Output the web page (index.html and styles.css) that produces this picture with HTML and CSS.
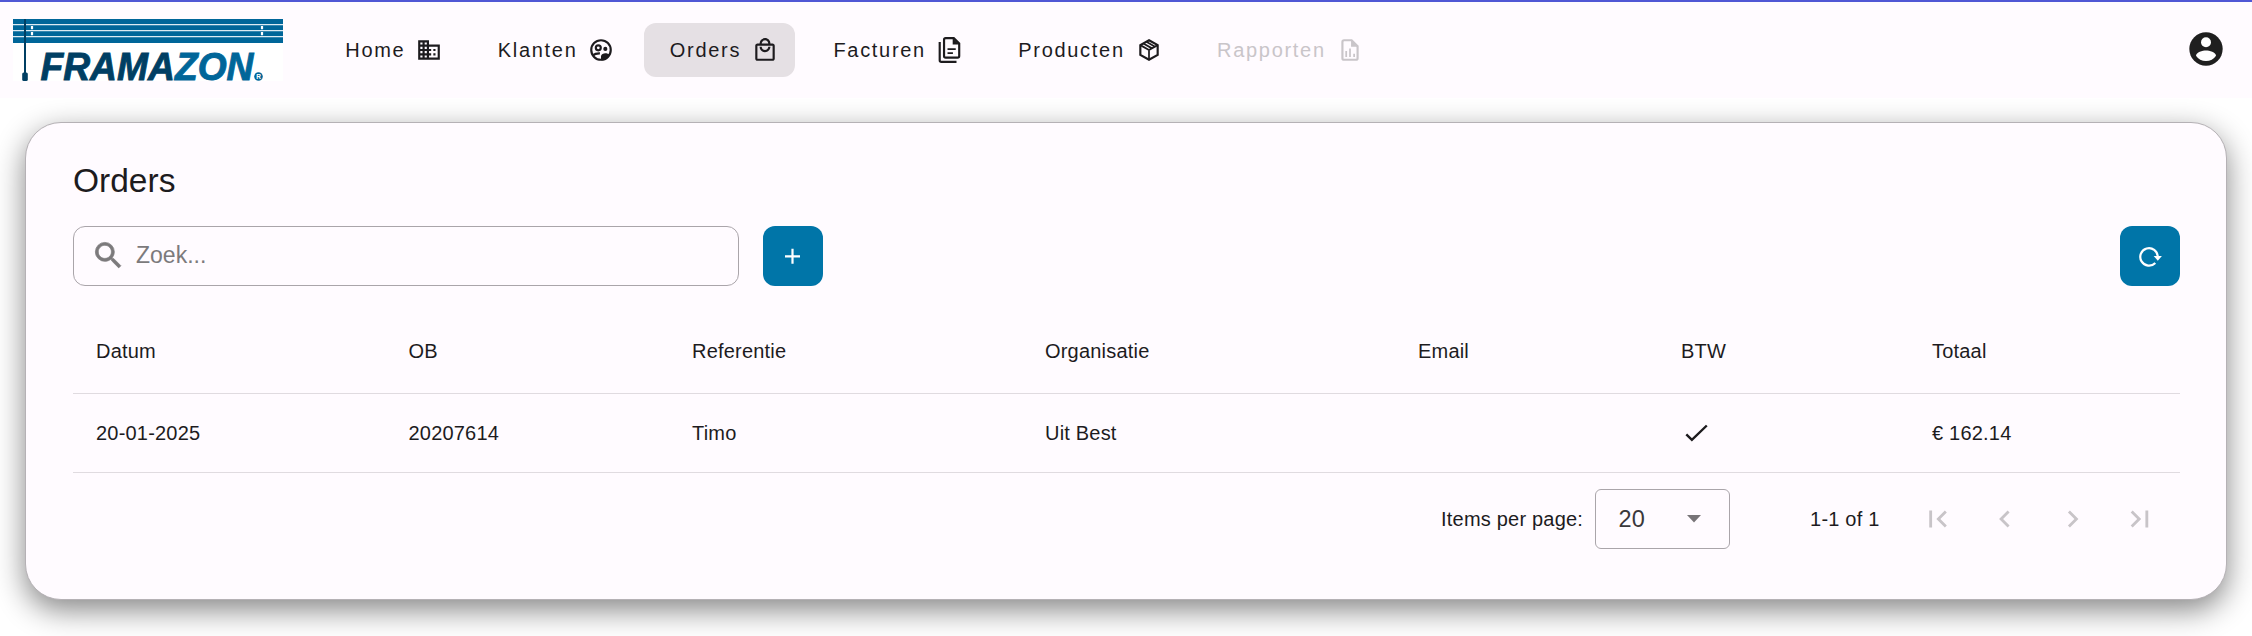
FILE: index.html
```html
<!DOCTYPE html>
<html lang="nl">
<head>
<meta charset="utf-8">
<title>Orders</title>
<link rel="stylesheet" href="styles.css">
</head>
<body>
<header class="topbar">
  <svg class="logo" viewBox="0 0 270 62" role="img" aria-label="Framazon">
    <rect width="270" height="62" fill="#fff"/>
    <rect width="270" height="24" fill="#006699"/>
    <path d="M0 5.6H270M0 11.7H270M0 17.6H270" stroke="#dceaf2" stroke-width="1.2"/>
    <path d="M19 7v3.300M19 13v3.300M249 7v3.300M249 13v3.300" stroke="#fff" stroke-width="2.200"/>
    <path d="M12 0V54" stroke="#003f63" stroke-width="2"/>
    <rect x="9.200" y="53.500" width="5.600" height="8.500" rx="1.500" fill="#003f63"/>
    <text class="logo-word" x="27.500" y="61" textLength="213" lengthAdjust="spacingAndGlyphs"><tspan class="dark">FRAMA</tspan><tspan class="light">ZON</tspan></text>
    <circle cx="245.500" cy="57.500" r="4.300" fill="#006699"/>
    <text class="logo-reg" x="243.200" y="59.900">R</text>
  </svg>
  <nav class="nav">
    <a class="nav-item">Home
      <svg class="icon" viewBox="0 0 24 24"><path d="M12 7V3H2v18h20V7H12zM6 19H4v-2h2v2zm0-4H4v-2h2v2zm0-4H4V9h2v2zm0-4H4V5h2v2zm4 12H8v-2h2v2zm0-4H8v-2h2v2zm0-4H8V9h2v2zm0-4H8V5h2v2zm10 12h-8v-2h2v-2h-2v-2h2v-2h-2V9h8v10zm-2-8h-2v2h2v-2zm0 4h-2v2h2v-2z"/></svg></a>
    <a class="nav-item">Klanten
      <svg class="icon" viewBox="0 0 24 24"><circle class="line" cx="12" cy="12" r="9"/><circle class="line" cx="9.500" cy="10" r="2.300"/><circle cx="16" cy="11" r="1.900"/><path d="M12 21.500v-3.700c0-1.900 2.400-2.900 4-2.900 1.300 0 3.200.6 4.300 1.500-1.500 3.100-4.700 5.100-8.300 5.100z"/><path class="line" d="M4.500 17c1.500-1.400 3.600-2 6.500-1.900"/></svg></a>
    <a class="nav-item active">Orders
      <svg class="icon" viewBox="0 0 24 24"><path d="M19 6h-2c0-2.760-2.240-5-5-5S7 3.240 7 6H5c-1.100 0-2 .9-2 2v12c0 1.100.9 2 2 2h14c1.100 0 2-.9 2-2V8c0-1.100-.9-2-2-2zm-7-3c1.660 0 3 1.340 3 3H9c0-1.660 1.340-3 3-3zm7 17H5V8h14v12zm-7-8c-1.660 0-3-1.340-3-3H7c0 2.760 2.240 5 5 5s5-2.240 5-5h-2c0 1.660-1.340 3-3 3z"/></svg></a>
    <a class="nav-item">Facturen
      <svg class="icon" viewBox="0 0 24 24"><path class="line" d="M8 1h7.500l5 5v11.500A1.500 1.500 0 0 1 19 19H8a1.500 1.500 0 0 1-1.500-1.500v-15A1.500 1.500 0 0 1 8 1zM2.500 4.500v17a1.500 1.500 0 0 0 1.500 1.500H18"/><path class="line thin" d="M9.700 11.200h7.600M9.700 14.800h5"/><path d="M14.500 1v6h6z"/></svg></a>
    <a class="nav-item">Producten
      <svg class="icon" viewBox="0 0 24 24"><path class="line" d="M12 3l8 4.500v9L12 21l-8-4.500v-9z"/><path class="line thin" d="M4 7.500l8 4.600 8-4.600M12 12v9M6.800 5.900l8 4.600M9.600 4.400l8 4.600"/></svg></a>
    <a class="nav-item disabled">Rapporten
      <svg class="icon" viewBox="0 0 24 24"><path class="line" d="M6.500 3h7l5.500 5.500v11a1.500 1.500 0 0 1-1.500 1.500h-11A1.500 1.500 0 0 1 5 19.500v-15A1.500 1.500 0 0 1 6.500 3z"/><path class="line thin" d="M8.500 13v5.500M12 10.500v8M15.800 15.500v3"/><path d="M13 3v6h6z"/></svg></a>
  </nav>
  <svg class="account" viewBox="0 0 24 24"><circle cx="12" cy="12" r="10"/><circle cx="12" cy="8" r="3" fill="#fff"/><path fill="#fff" d="M12 19.200c-2.500 0-4.710-1.280-6-3.220.03-1.990 4-3.080 6-3.080s5.970 1.090 6 3.080c-1.290 1.940-3.500 3.220-6 3.220z"/></svg>
</header>

<main class="card">
  <h1 class="title">Orders</h1>
  <div class="toolbar">
    <label class="search">
      <svg class="search-icon" viewBox="0 0 24 24"><path d="M15.500 14h-.79l-.28-.27A6.470 6.470 0 0 0 16 9.500 6.500 6.500 0 1 0 9.500 16c1.610 0 3.090-.59 4.230-1.570l.27.28v.79l5 4.990L20.490 19l-4.990-5zm-6 0C7.010 14 5 11.990 5 9.500S7.010 5 9.500 5 14 7.010 14 9.500 11.990 14 9.500 14z"/></svg>
      <span>Zoek...</span>
    </label>
    <button class="btn"><svg class="btn-icon" viewBox="0 0 24 24"><path d="M11.500 4.800v15M4 12.300h15"/></svg></button>
    <button class="btn refresh"><svg class="btn-icon" viewBox="0 0 24 24"><path d="M17.300 18.900A8.700 8.700 0 1 1 19.700 12.800"/><path class="solid" d="M15.700 12h8.200l-4.100 4.800z"/></svg></button>
  </div>

  <div class="table">
    <div class="row head"><span>Datum</span><span>OB</span><span>Referentie</span><span>Organisatie</span><span>Email</span><span>BTW</span><span>Totaal</span></div>
    <div class="row"><span>20-01-2025</span><span>20207614</span><span>Timo</span><span>Uit Best</span><span></span><span><svg class="check" viewBox="0 0 30 24"><path d="M5.300 13.300l5.600 5.600L25.800 4.500"/></svg></span><span>€ 162.14</span></div>
  </div>

  <div class="paginator">
    <span>Items per page:</span>
    <div class="select">20<svg class="arrow" viewBox="0 0 14 8"><path d="M0 0h14L7 7.500z"/></svg></div>
    <span class="range">1-1 of 1</span>
    <div class="pages">
      <svg viewBox="0 0 24 24"><path d="M18.410 16.590L13.820 12l4.590-4.590L17 6l-6 6 6 6zM6 6h2v12H6z"/></svg>
      <svg viewBox="0 0 24 24"><path d="M15.410 7.410L14 6l-6 6 6 6 1.410-1.410L10.830 12z"/></svg>
      <svg viewBox="0 0 24 24"><path d="M10 6L8.590 7.410 13.170 12l-4.580 4.590L10 18l6-6z"/></svg>
      <svg viewBox="0 0 24 24"><path d="M5.590 7.410L10.180 12l-4.590 4.590L7 18l6-6-6-6zM16 6h2v12h-2z"/></svg>
    </div>
  </div>
</main>
</body>
</html>
```
FILE: styles.css
```css
* { box-sizing: border-box; }

body {
  margin: 0;
  height: 636px;
  overflow: hidden;
  background: #fff;
  color: #1d1b1e;
  font-family: "Liberation Sans", Arial, sans-serif;
  font-size: 20px;
}

.topbar {
  position: relative;
  z-index: 1;
  display: flex;
  align-items: center;
  height: 98px;
  padding: 0 26px 2px 13px;
  border-top: 2px solid #5057d5;
  background: #fffbff;
}

.logo { width: 270px; height: 62px; margin-top: 2px; overflow: visible; }
.logo-word { font-size: 39px; font-weight: bold; font-style: italic; stroke-width: .900; }
.dark { fill: #003f63; stroke: #003f63; }
.light { fill: #006699; stroke: #006699; }
.logo-reg { font-size: 6.500px; font-weight: bold; fill: #fff; }

.nav { display: flex; gap: 13px; margin-top: 2px; margin-left: 37px; }

.nav-item {
  display: flex;
  align-items: center;
  gap: 11px;
  height: 54px;
  padding: 0 17px 0 25.300px;
  border-radius: 12px;
  letter-spacing: 1.700px;
}

.nav-item.active { background: #e5e0e4; }
.nav-item.disabled { color: #c9c5c9; }

.icon { width: 26px; height: 26px; fill: currentColor; }
.line { fill: none; stroke: currentColor; stroke-width: 2; }
.thin { stroke-width: 1.600; }

.account { width: 40px; height: 40px; margin-left: auto; fill: #1f1f1f; }

.card {
  width: 2202px;
  height: 478px;
  margin: 24px 0 0 25px;
  padding: 0 46px 0 47px;
  border: 1px solid #b5b1b5;
  border-radius: 36px;
  background: #fffbff;
  box-shadow: 0 10px 30px rgba(0, 0, 0, .48);
}

.title {
  margin: 0;
  padding-top: 38px;
  font-size: 33.500px;
  font-weight: normal;
  line-height: 40px;
}

.toolbar { display: flex; gap: 24px; margin-top: 25px; }

.search {
  display: flex;
  align-items: center;
  gap: 10px;
  width: 666px;
  height: 60px;
  padding-left: 17px;
  border: 1px solid #aaa5aa;
  border-radius: 12px;
  color: #7c7a7c;
  font-size: 23px;
}

.search span { margin-top: -1px; }
.search-icon { width: 35px; height: 35px; margin-top: -2px; fill: #7c7a7c; stroke: #7c7a7c; stroke-width: .5; }

.btn {
  display: flex;
  align-items: center;
  justify-content: center;
  width: 60px;
  height: 60px;
  padding: 0;
  border: 0;
  border-radius: 12px;
  background: #0075a8;
}

.refresh { margin-left: auto; }
.btn-icon { width: 24px; height: 24px; overflow: visible; fill: none; stroke: #fff; stroke-width: 2.200; }
.btn .solid { fill: #fff; stroke: none; }

.table { margin-top: 23px; letter-spacing: .200px; }

.row {
  display: grid;
  grid-template-columns: 312.500px 283.500px 353px 373px 263px 251px 1fr;
  align-items: center;
  height: 79px;
  border-bottom: 1px solid #e0dbe0;
}

.row.head { height: 85px; }
.row > span { padding-left: 23px; }
.check { display: block; width: 30px; height: 24px; fill: none; stroke: #1d1b1e; stroke-width: 2.400; }

.paginator {
  display: flex;
  align-items: center;
  justify-content: flex-end;
  height: 60px;
  margin-top: 16px;
  padding-right: 6.500px;
  letter-spacing: .200px;
}

.select {
  display: flex;
  align-items: center;
  justify-content: space-between;
  width: 135px;
  height: 60px;
  margin-left: 12px;
  padding: 0 28px 0 22.500px;
  border: 1px solid #aaa5aa;
  border-radius: 6px;
  color: #3a383b;
  font-size: 23.500px;
}

.arrow { width: 14px; height: 8px; fill: #777477; }
.range { margin-left: 80px; }
.pages { display: flex; margin-left: 24px; }
.pages svg { width: 67.500px; height: 34px; fill: #c8c4c8; }
```
